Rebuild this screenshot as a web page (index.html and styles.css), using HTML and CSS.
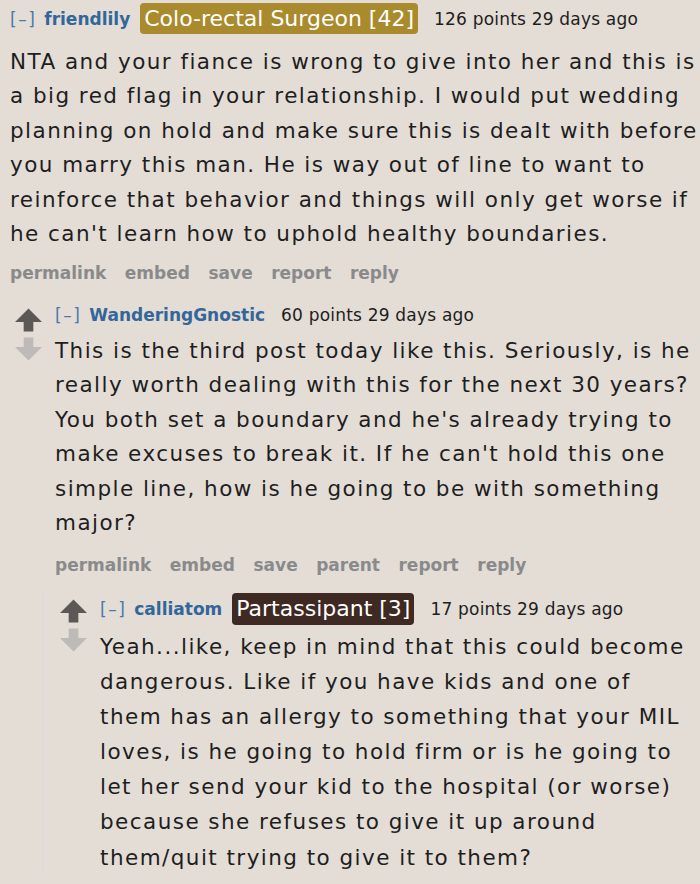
FILE: index.html
```html
<!DOCTYPE html>
<html>
<head>
<meta charset="utf-8">
<link rel="stylesheet" href="styles.css">
</head>
<body>
<div class="page">
  <div class="comment top">
    <div class="content">
      <div class="tagline">
        <span class="expand">[–]</span>
        <span class="author">friendlily</span>
        <span class="flair gold">Colo-rectal Surgeon [42]</span>
        <span class="meta">126 points 29 days ago</span>
      </div>
      <p class="text">NTA and your fiance is wrong to give into her and this is a big red flag in your relationship. I would put wedding planning on hold and make sure this is dealt with before you marry this man. He is way out of line to want to reinforce that behavior and things will only get worse if he can't learn how to uphold healthy boundaries.</p>
      <ul class="buttons">
        <li>permalink</li><li>embed</li><li>save</li><li>report</li><li>reply</li>
      </ul>
    </div>
  </div>

  <div class="comment child">
    <div class="votes">
      <svg class="arrow up" viewBox="0 0 28 24"><path d="M14 0 L28 14 L19 14 L19 24 L9 24 L9 14 L0 14 Z"/></svg>
      <svg class="arrow down" viewBox="0 0 28 24"><path d="M14 24 L28 10 L19 10 L19 0 L9 0 L9 10 L0 10 Z"/></svg>
    </div>
    <div class="content">
      <div class="tagline">
        <span class="expand">[–]</span>
        <span class="author">WanderingGnostic</span>
        <span class="meta">60 points 29 days ago</span>
      </div>
      <p class="text">This is the third post today like this. Seriously, is he really worth dealing with this for the next 30 years? You both set a boundary and he's already trying to make excuses to break it. If he can't hold this one simple line, how is he going to be with something major?</p>
      <ul class="buttons">
        <li>permalink</li><li>embed</li><li>save</li><li>parent</li><li>report</li><li>reply</li>
      </ul>
    </div>
  </div>

  <div class="children">
    <div class="comment grandchild">
      <div class="votes">
        <svg class="arrow up" viewBox="0 0 28 24"><path d="M14 0 L28 14 L19 14 L19 24 L9 24 L9 14 L0 14 Z"/></svg>
        <svg class="arrow down" viewBox="0 0 28 24"><path d="M14 24 L28 10 L19 10 L19 0 L9 0 L9 10 L0 10 Z"/></svg>
      </div>
      <div class="content">
        <div class="tagline">
          <span class="expand">[–]</span>
          <span class="author">calliatom</span>
          <span class="flair brown">Partassipant [3]</span>
          <span class="meta">17 points 29 days ago</span>
        </div>
        <p class="text">Yeah...like, keep in mind that this could become dangerous. Like if you have kids and one of them has an allergy to something that your MIL loves, is he going to hold firm or is he going to let her send your kid to the hospital (or worse) because she refuses to give it up around them/quit trying to give it to them?</p>
      </div>
    </div>
  </div>
</div>
</body>
</html>
```
FILE: styles.css
```css
html, body {
  margin: 0;
  padding: 0;
  background: #e3ddd6;
}
body {
  font-family: "DejaVu Sans", Verdana, sans-serif;
  color: #1e1e1e;
  width: 700px;
  height: 884px;
  overflow: hidden;
}
.page {
  width: 706px;
  padding-top: 3px;
}
.comment {
  display: flex;
}
.top {
  padding-left: 10px;
}
.child {
  padding-left: 15px;
  margin-top: 8.5px;
}
.children {
  margin-left: 42px;
  border-left: 1px solid #d9d8e3;
  margin-top: 10.5px;
}
.grandchild {
  padding-left: 17px;
}
.votes {
  width: 27px;
  flex: none;
  display: flex;
  flex-direction: column;
  align-items: center;
  gap: 5px;
  padding-top: 8.5px;
  margin-right: 13px;
}
.grandchild .votes {
  padding-top: 6px;
}
.arrow {
  width: 27px;
  height: 24px;
  display: block;
}
.arrow.up path { fill: #5b5856; }
.arrow.down path { fill: #bdbab8; }
.content {
  flex: 1;
  min-width: 0;
}
.tagline {
  display: flex;
  align-items: center;
  height: 31px;
  font-size: 17px;
  white-space: nowrap;
}
.grandchild .tagline {
  height: 32px;
}
.expand {
  color: #4a78a8;
  letter-spacing: 1.5px;
  margin-right: 8px;
}
.author {
  color: #336699;
  font-weight: bold;
  margin-right: 10px;
}
.child .author {
  margin-right: 16px;
}
.flair {
  color: #fff;
  font-size: 22px;
  border-radius: 4px;
  height: 31px;
  line-height: 31px;
  padding: 0 4px;
  margin-right: 16px;
}
.flair.gold { background: #a98a2c; }
.flair.brown {
  background: #3e2a23;
  height: 32px;
  line-height: 32px;
}
.meta {
  color: #1e1e1e;
  letter-spacing: 0.2px;
}
.text {
  margin: 0;
  font-size: 21.5px;
  letter-spacing: 1.45px;
  line-height: 34.5px;
  padding-top: 3.5px;
}
.top .text {
  padding-top: 11px;
  line-height: 34.4px;
}
.grandchild .text {
  line-height: 35.1px;
  padding-top: 3.5px;
  max-width: 592px;
}
.buttons {
  list-style: none;
  margin: 0;
  padding: 0;
  display: flex;
  gap: 18.5px;
  font-size: 17px;
  font-weight: bold;
  color: #8a8a8a;
  height: 36px;
  align-items: center;
  margin-top: 3.5px;
}
.child .buttons {
  margin-top: 6px;
}
```
